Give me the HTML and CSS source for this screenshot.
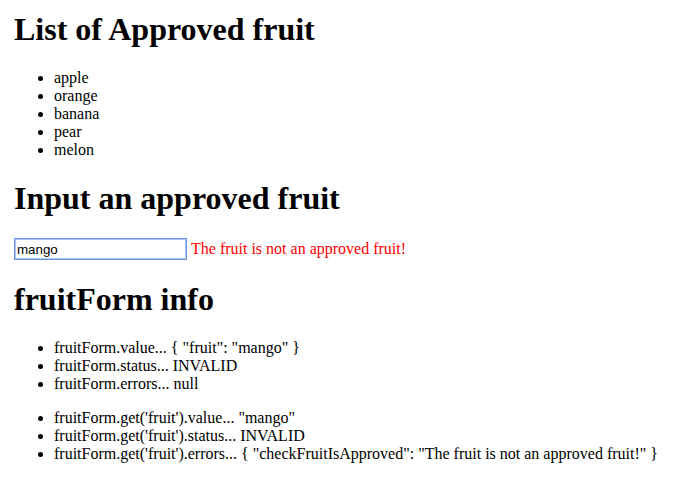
FILE: index.html
```html
<!DOCTYPE html>
<html>
<head>
<meta charset="utf-8">
<link rel="stylesheet" href="styles.css">
</head>
<body>
<h1 class="title first">List of Approved fruit</h1>
<ul class="list">
  <li>apple</li>
  <li>orange</li>
  <li>banana</li>
  <li>pear</li>
  <li>melon</li>
</ul>
<h1 class="title">Input an approved fruit</h1>
<div class="form-row">
  <input class="fruit-input" type="text" value="mango"> <span class="error">The fruit is not an approved fruit!</span>
</div>
<h1 class="title">fruitForm info</h1>
<ul class="list">
  <li>fruitForm.value... { "fruit": "mango" }</li>
  <li>fruitForm.status... INVALID</li>
  <li>fruitForm.errors... null</li>
</ul>
<ul class="list">
  <li>fruitForm.get('fruit').value... "mango"</li>
  <li>fruitForm.get('fruit').status... INVALID</li>
  <li>fruitForm.get('fruit').errors... { "checkFruitIsApproved": "The fruit is not an approved fruit!" }</li>
</ul>
</body>
</html>
```
FILE: styles.css
```css
body {
  margin: 0 14px 8px;
  font-family: "Liberation Serif", "Times New Roman", serif;
  font-size: 16px;
  color: #000;
  background: #fff;
}
.title {
  font-size: 32px;
  font-weight: bold;
  margin: 21px 0;
}
.title.first {
  margin-top: 11px;
}
.list {
  margin: 16px 0;
  padding-left: 40px;
}
.form-row {
  margin: 0;
}
.fruit-input {
  box-sizing: border-box;
  width: 173px;
  height: 22px;
  padding: 1px 2px;
  border: 1px solid #6f95e2;
  outline: 1px solid #a8c3f4;
  outline-offset: -2px;
  font-family: "Liberation Sans", Arial, sans-serif;
  font-size: 13.33px;
  color: #000;
  vertical-align: middle;
}
.error {
  color: #f00;
  vertical-align: middle;
}
```
